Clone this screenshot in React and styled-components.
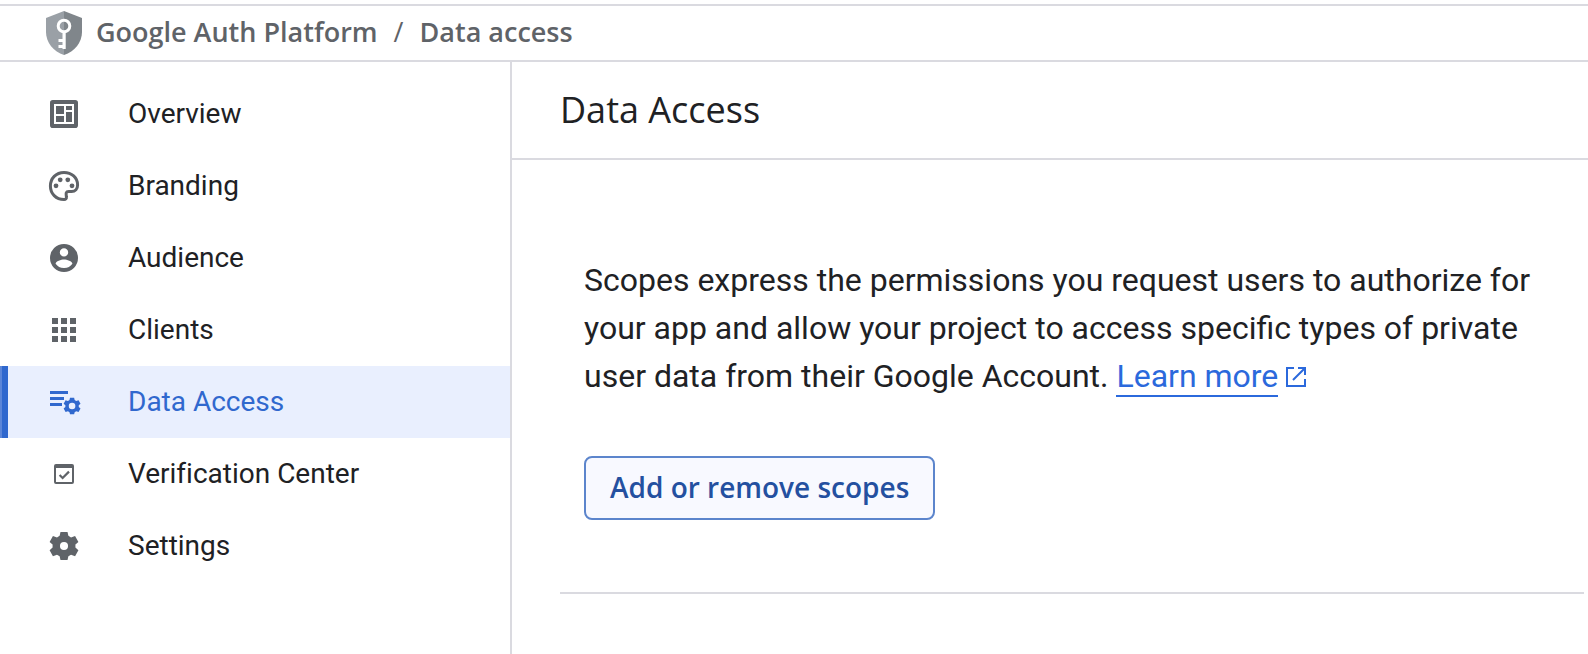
import React from "react";
import styled, { createGlobalStyle } from "styled-components";

const GlobalStyle = createGlobalStyle`
    * {
        box-sizing: border-box;
    }
    body {
        margin: 0;
        background-color: #fff;
        color: #202124;
        font-family: Roboto, sans-serif;
    }
`;

const Page = styled.div`
    display: flex;
    flex-direction: column;
    min-height: 100vh;
    padding-top: 4px;
`;

const Header = styled.header`
    display: flex;
    align-items: center;
    gap: 14px;
    height: 58px;
    padding: 0 46px;
    border-top: 2px solid #dadae0;
    border-bottom: 2px solid #dadae0;
`;

const Breadcrumb = styled.nav`
    display: flex;
    gap: 16px;
    padding-bottom: 2px;
    color: #5f6368;
    font-family: "Open Sans", sans-serif;
    font-size: 27px;
    font-weight: 600;
    line-height: 40px;
`;

const Crumb = styled.a`
    color: inherit;
    text-decoration: none;
`;

const Slash = styled.span`
    font-weight: 400;
`;

const Body = styled.div`
    display: flex;
    flex: 1;
`;

const Sidebar = styled.nav`
    flex: none;
    width: 512px;
    padding: 16px 0;
    border-right: 2px solid #dadae0;
`;

const NavItem = styled.a`
    display: flex;
    align-items: center;
    gap: 46px;
    height: 72px;
    padding-left: 46px;
    box-shadow: ${(props) => (props.$active ? "inset 2px 0 #5c86d8, inset 8px 0 #3068ce" : "none")};
    background-color: ${(props) => (props.$active ? "#e9effe" : "transparent")};
    color: ${(props) => (props.$active ? "#3068ce" : "#202124")};
    font-size: 28px;
    font-variant-ligatures: none;
    line-height: 40px;
    text-decoration: none;
`;

const NavIcon = styled.svg`
    flex: none;
    width: 36px;
    height: 36px;
    fill: ${(props) => (props.$active ? "#3068ce" : "#5f6368")};
`;

const Shield = styled.svg`
    flex: none;
    width: 36px;
    height: 44px;
`;

const Main = styled.main`
    flex: 1;
    min-width: 0;
`;

const TitleBar = styled.div`
    display: flex;
    align-items: center;
    height: 98px;
    padding: 0 48px;
    border-bottom: 2px solid #dadae0;
`;

const Title = styled.h1`
    margin: 0;
    font-family: "Open Sans", sans-serif;
    font-size: 36px;
    font-weight: 400;
    line-height: 48px;
`;

const Section = styled.section`
    margin: 0 4px 0 48px;
    padding: 96px 24px 72px;
    border-bottom: 2px solid #dadae0;
`;

const Description = styled.p`
    margin: 0 0 56px;
    font-size: 32px;
    line-height: 48px;
`;

const LearnMore = styled.a`
    border-bottom: 2px solid #2b69dc;
    color: #2b69dc;
    text-decoration: none;
`;

const ExternalIcon = styled.svg`
    width: 20px;
    height: 20px;
    margin-left: 8px;
    fill: none;
    stroke: #2b69dc;
    stroke-width: 2;
`;

const ScopesButton = styled.button`
    display: block;
    height: 64px;
    padding: 0 24px 2px;
    border: 2px solid #5c85cc;
    border-radius: 8px;
    background-color: #f8f9ff;
    color: #2450a0;
    font-family: "Open Sans", sans-serif;
    font-size: 28px;
    font-weight: 600;
    line-height: 40px;
`;

const gear =
    "M7 1h4l.5 2.200 1.500.9 2.300-.8 1.900 3.400-1.700 1.500v1.700l1.700 1.500-1.900 3.400-2.300-.8-1.500.9L11 17H7l-.5-2.100-1.500-.9-2.300.8-1.900-3.400 1.700-1.500V8.200L.8 6.700l1.900-3.400 2.300.8 1.500-.9z";

const navItems = [
    {
        label: "Overview",
        icon: (
            <path
                fillRule="evenodd"
                d="M3.400 2h11.200A1.400 1.400 0 0 1 16 3.400v11.200a1.400 1.400 0 0 1-1.400 1.400H3.400A1.400 1.400 0 0 1 2 14.600V3.400A1.400 1.400 0 0 1 3.400 2zM4 4v10h10V4zm1 1h4v4H5zm5 0h3v2h-3zm0 3h3v5h-3zm-5 2h4v3H5z"
            />
        ),
    },
    {
        label: "Branding",
        icon: (
            <>
                <path
                    d="M9 2.200C5 2.200 2.200 5.200 2.200 9S5 15.800 9 15.800c.9 0 1.300-.6 1.200-1.300-.1-1.500-.6-2.700 1.100-2.700h1.500c1.800 0 3-1.300 3-3.300 0-3.700-3-6.300-6.800-6.300z"
                    fill="none"
                    stroke="#5f6368"
                    strokeWidth="1.500"
                />
                <circle cx="5" cy="8.900" r="1.200" />
                <circle cx="7.100" cy="5.900" r="1.200" />
                <circle cx="10.900" cy="5.900" r="1.200" />
                <circle cx="13" cy="8.900" r="1.200" />
            </>
        ),
    },
    {
        label: "Audience",
        icon: (
            <path
                fillRule="evenodd"
                d="M9 2a7 7 0 1 0 0 14A7 7 0 0 0 9 2zm0 2.100a2.100 2.100 0 1 1 0 4.200 2.100 2.100 0 0 1 0-4.200zM4.800 11.900c0-1.400 2.800-2.200 4.200-2.200s4.200.8 4.200 2.200A5 5 0 0 1 9 14a5 5 0 0 1-4.200-2.100z"
            />
        ),
    },
    {
        label: "Clients",
        icon: (
            <path d="M3 3h3v3H3zm4.500 0h3v3h-3zM12 3h3v3h-3zM3 7.500h3v3H3zm4.500 0h3v3h-3zm4.500 0h3v3h-3zM3 12h3v3H3zm4.500 0h3v3h-3zm4.500 0h3v3h-3z" />
        ),
    },
    {
        label: "Data Access",
        active: true,
        icon: (
            <>
                <path d="M2 3.500h9V5H2zm0 3h7V8H2zm0 3h6V11H2z" />
                <path
                    fillRule="evenodd"
                    transform="translate(8.400 6.400) scale(.515)"
                    d={gear + "M9 5.800a3.200 3.200 0 1 0 0 6.400 3.200 3.200 0 0 0 0-6.400z"}
                />
            </>
        ),
    },
    {
        label: "Verification Center",
        icon: (
            <>
                <path
                    fillRule="evenodd"
                    d="M5 4h8a1 1 0 0 1 1 1v8a1 1 0 0 1-1 1H5a1 1 0 0 1-1-1V5a1 1 0 0 1 1-1zM5 6v7h8V6z"
                />
                <path d="M6.800 9.500l1.500 1.500 3.200-3.200" fill="none" stroke="#5f6368" strokeWidth="1.100" />
            </>
        ),
    },
    {
        label: "Settings",
        icon: (
            <path
                fillRule="evenodd"
                transform="translate(1.100 1.100) scale(.878)"
                d={gear + "M9 6.700a2.300 2.300 0 1 0 0 4.600 2.300 2.300 0 0 0 0-4.600z"}
            />
        ),
    },
];

const ShieldIcon = () => (
    <Shield viewBox="0 0 36 44" aria-hidden="true">
        <path fill="#9aa0a6" d="M18 0L0 7v14c0 10.500 7.500 19.500 18 23z" />
        <path fill="#80868b" d="M18 0l18 7v14c0 10.500-7.500 19.500-18 23z" />
        <circle cx="18" cy="15" r="5.800" fill="none" stroke="#fff" strokeWidth="3" />
        <path fill="#fff" d="M16.500 21h3.200v17h-3.200v-1h-4v-3h4v-3h-4v-3h4z" />
    </Shield>
);

const App = () => {
    return (
        <Page>
            <GlobalStyle />
            <Header>
                <ShieldIcon />
                <Breadcrumb aria-label="Breadcrumb">
                    <Crumb href="#">Google Auth Platform</Crumb>
                    <Slash>/</Slash>
                    <span>Data access</span>
                </Breadcrumb>
            </Header>
            <Body>
                <Sidebar>
                    {navItems.map((item) => (
                        <NavItem key={item.label} href="#" $active={item.active}>
                            <NavIcon viewBox="0 0 18 18" $active={item.active} aria-hidden="true">
                                {item.icon}
                            </NavIcon>
                            {item.label}
                        </NavItem>
                    ))}
                </Sidebar>
                <Main>
                    <TitleBar>
                        <Title>Data Access</Title>
                    </TitleBar>
                    <Section>
                        <Description>
                            Scopes express the permissions you request users to authorize for your app and
                            allow your project to access specific types of private user data from their
                            Google Account. <LearnMore href="#">Learn more</LearnMore>
                            <ExternalIcon viewBox="0 0 20 20" aria-hidden="true">
                                <path d="M8 1H1v18h18v-7M12 1h7v7M19 1L7 13" />
                            </ExternalIcon>
                        </Description>
                        <ScopesButton type="button">Add or remove scopes</ScopesButton>
                    </Section>
                </Main>
            </Body>
        </Page>
    );
};

export default App;
